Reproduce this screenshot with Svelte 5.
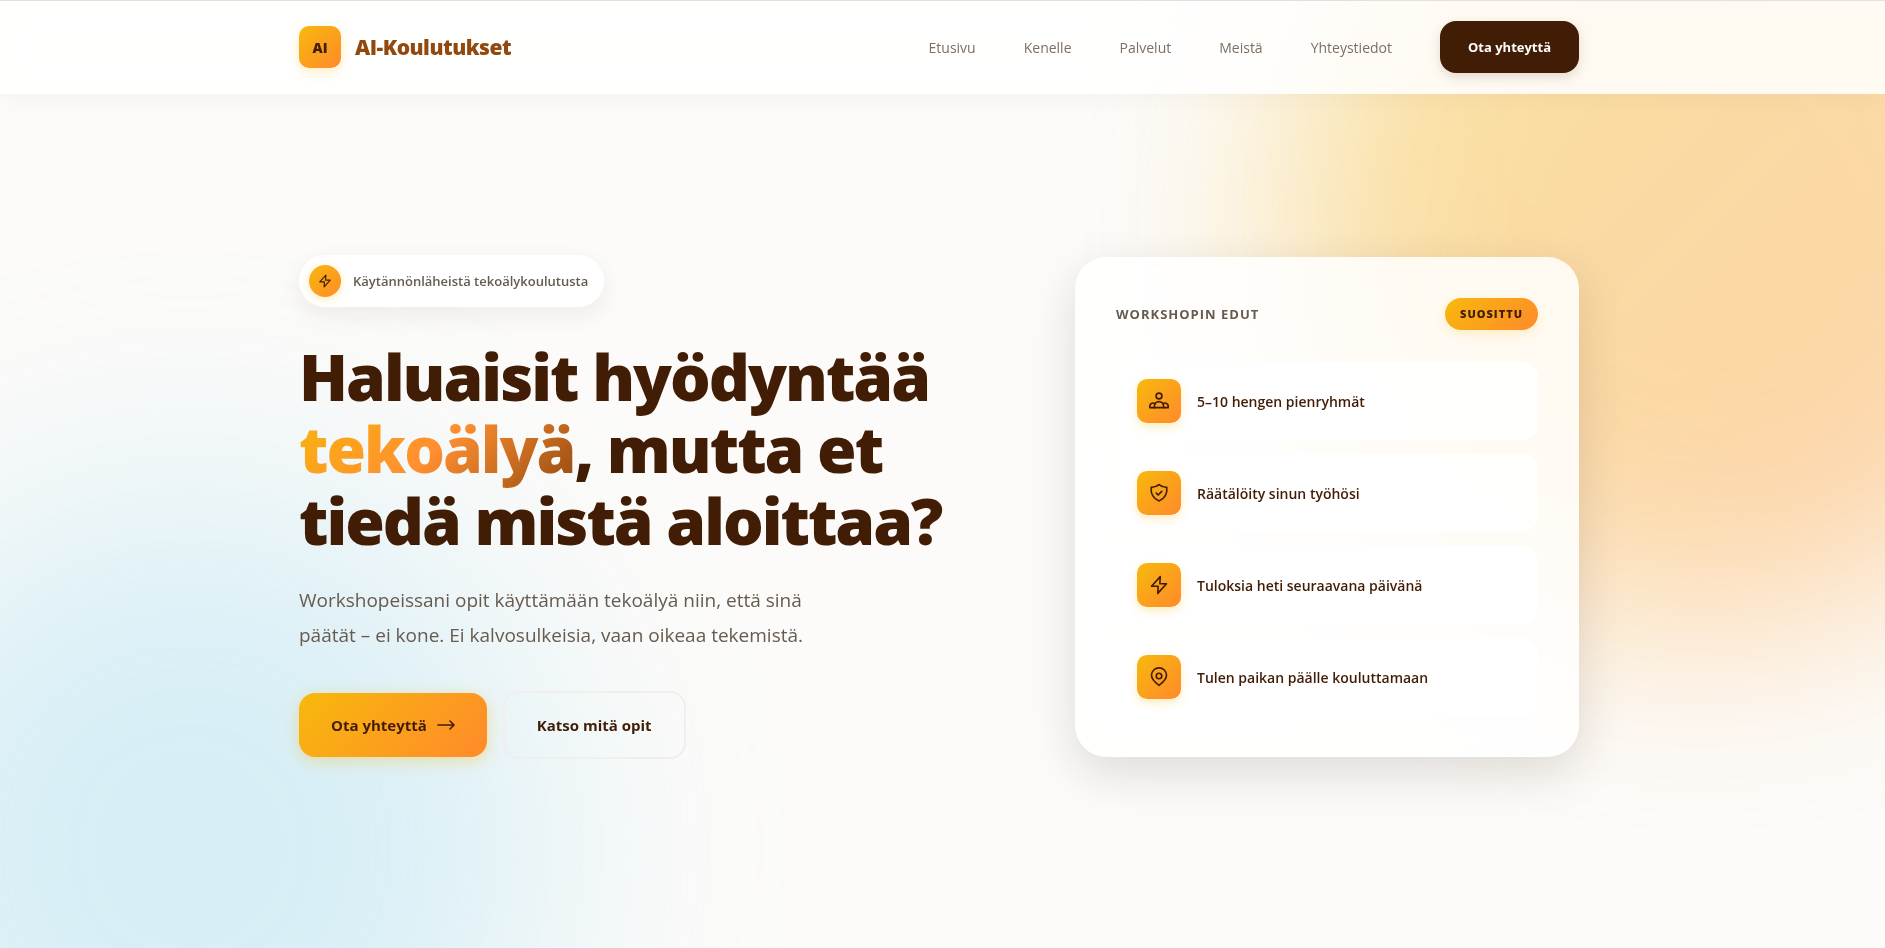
<script lang="ts">
  const navLinks = [
    { label: 'Etusivu', href: '#etusivu' },
    { label: 'Kenelle', href: '#kenelle' },
    { label: 'Palvelut', href: '#palvelut' },
    { label: 'Meistä', href: '#meista' },
    { label: 'Yhteystiedot', href: '#yhteystiedot' },
  ];

  const benefits = [
    { icon: 'people', text: '5–10 hengen pienryhmät' },
    { icon: 'shield', text: 'Räätälöity sinun työhösi' },
    { icon: 'bolt', text: 'Tuloksia heti seuraavana päivänä' },
    { icon: 'pin', text: 'Tulen paikan päälle kouluttamaan' },
  ];
</script>

{#snippet icon(name: string, size: number)}
  <svg class="icon" width={size} height={size} viewBox="0 0 24 24" aria-hidden="true">
    {#if name === 'people'}
      <circle cx="12" cy="6" r="3.5" />
      <path d="M6.5 20v-1.800a5.500 5.500 0 0 1 11 0V20" />
      <path d="M7.200 15.300A3.800 3.800 0 0 0 1 18.600V20h22v-1.400a3.800 3.800 0 0 0-6.200-3.300" />
    {:else if name === 'shield'}
      <path d="M12 2c2.600 2.200 5.800 3.300 9.300 3.100.9 7.400-2.500 13.800-9.300 16.400C5.200 18.900 1.800 12.500 2.700 5.100 6.200 5.300 9.400 4.200 12 2z" />
      <path d="M8.800 12.200l2.200 2.200 4.300-4.400" />
    {:else if name === 'bolt'}
      <path d="M13.500 2L3 13.500h8L10.500 22 21 10.500h-8z" />
    {:else if name === 'pin'}
      <path d="M12 22c-3.500-2.500-9-6.500-9-12a9 9 0 0 1 18 0c0 5.500-5.500 9.500-9 12z" />
      <circle cx="12" cy="10.800" r="3.300" />
    {/if}
  </svg>
{/snippet}

<div class="page">
  <div class="glow glow-warm"></div>
  <div class="glow glow-cool"></div>

  <header class="header">
    <div class="container header-inner">
      <a href="#etusivu" class="logo">
        <span class="logo-mark">AI</span>
        <span class="logo-text">AI-Koulutukset</span>
      </a>
      <nav class="nav">
        {#each navLinks as link}
          <a href={link.href} class="nav-link">{link.label}</a>
        {/each}
        <a href="#yhteystiedot" class="nav-cta">Ota yhteyttä</a>
      </nav>
    </div>
  </header>

  <main class="container hero">
    <section class="hero-text">
      <div class="badge">
        <span class="badge-icon">{@render icon('bolt', 14)}</span>
        Käytännönläheistä tekoälykoulutusta
      </div>
      <h1>
        Haluaisit hyödyntää<br />
        <span class="highlight">tekoälyä</span>, mutta et<br />
        tiedä mistä aloittaa?
      </h1>
      <p class="lead">
        Workshopeissani opit käyttämään tekoälyä niin, että sinä<br />
        päätät – ei kone. Ei kalvosulkeisia, vaan oikeaa tekemistä.
      </p>
      <div class="actions">
        <a href="#yhteystiedot" class="btn btn-primary">
          Ota yhteyttä
          <svg class="icon arrow" width="18" height="12" viewBox="0 0 18 12" aria-hidden="true">
            <path d="M1 6h16M13 2l4 4-4 4" />
          </svg>
        </a>
        <a href="#palvelut" class="btn btn-secondary">Katso mitä opit</a>
      </div>
    </section>

    <aside class="card">
      <div class="card-header">
        <h2>Workshopin edut</h2>
        <span class="pill">Suosittu</span>
      </div>
      <ul class="benefits">
        {#each benefits as benefit}
          <li class="benefit">
            <span class="benefit-icon">{@render icon(benefit.icon, 20)}</span>
            <span>{benefit.text}</span>
          </li>
        {/each}
      </ul>
    </aside>
  </main>
</div>

<style>
  :global(body) {
    background: #fcfbf9;
  }

  .page {
    --brown: #421d06;
    --muted: #675b50;
    --sun: linear-gradient(135deg, #f7b90c, #ff8a2b);
    position: relative;
    min-height: 100vh;
    overflow: hidden;
    box-sizing: border-box;
    padding-right: 7px;
    font-family: 'Segoe UI', 'Open Sans', 'Noto Sans', sans-serif;
    color: var(--brown);
  }

  .container {
    max-width: 1280px;
    margin: 0 auto;
  }

  .icon {
    fill: none;
    stroke: currentColor;
    stroke-width: 2;
    stroke-linecap: round;
    stroke-linejoin: round;
  }

  .arrow {
    stroke-width: 1.6;
  }

  .glow {
    position: absolute;
    border-radius: 50%;
  }

  .glow-warm {
    top: -200px;
    right: -230px;
    width: 830px;
    height: 830px;
    background: linear-gradient(135deg, #f4c020 10%, #ff9a40 90%);
    filter: blur(100px);
    opacity: 0.42;
  }

  .glow-cool {
    left: -180px;
    bottom: -270px;
    width: 740px;
    height: 740px;
    background: radial-gradient(#7fd0f0 30%, #a5dcf2);
    filter: blur(120px);
    opacity: 0.3;
  }

  .header {
    position: relative;
    margin-right: -7px;
    padding-right: 7px;
    border-top: 1px solid #e2e1df;
    background: rgba(255, 255, 255, 0.85);
    box-shadow: 0 4px 24px rgba(66, 29, 6, 0.04);
    backdrop-filter: blur(20px);
  }

  .header-inner {
    display: flex;
    align-items: center;
    justify-content: space-between;
    padding: 20px 0 21px;
  }

  .logo {
    display: flex;
    align-items: center;
    gap: 14px;
    text-decoration: none;
  }

  .logo-mark {
    display: grid;
    place-items: center;
    width: 42px;
    height: 42px;
    border-radius: 10px;
    background: var(--sun);
    box-shadow: 0 4px 12px rgba(247, 185, 12, 0.25);
    color: var(--brown);
    font-size: 14px;
    font-weight: 800;
  }

  .logo-text {
    color: #924910;
    font-size: 21px;
    font-weight: 800;
    letter-spacing: -0.5px;
  }

  .nav {
    display: flex;
    align-items: center;
    gap: 48px;
  }

  .nav-link {
    color: #7c6f64;
    font-size: 14px;
    font-weight: 500;
    text-decoration: none;
  }

  .nav-cta {
    padding: 0 28px;
    border-radius: 16px;
    background: var(--brown);
    box-shadow: 0 4px 12px rgba(66, 29, 6, 0.15);
    color: #fff;
    font-size: 13px;
    font-weight: 700;
    line-height: 52px;
    text-decoration: none;
  }

  .hero {
    position: relative;
    display: flex;
    align-items: center;
    justify-content: space-between;
    padding: 161px 0;
  }

  .badge {
    display: inline-flex;
    align-items: center;
    gap: 12px;
    padding: 10px 16px 10px 10px;
    border-radius: 26px;
    background: #fff;
    box-shadow: 0 8px 24px rgba(66, 29, 6, 0.07);
    color: var(--muted);
    font-size: 13px;
    font-weight: 600;
  }

  .badge-icon {
    display: grid;
    place-items: center;
    width: 32px;
    height: 32px;
    border-radius: 50%;
    background: var(--sun);
    box-shadow: 0 2px 8px rgba(247, 185, 12, 0.3);
    color: var(--brown);
  }

  h1 {
    margin: 34px 0 26px;
    font-size: 64px;
    font-weight: 800;
    line-height: 72px;
    letter-spacing: -2px;
  }

  .highlight {
    background: linear-gradient(135deg, #f9b40e 0%, #ff8f30 50%, #924910 100%);
    background-clip: text;
    color: transparent;
  }

  .lead {
    margin: 0;
    color: var(--muted);
    font-size: 19px;
    line-height: 35px;
  }

  .actions {
    display: flex;
    align-items: center;
    gap: 16px;
    margin-top: 38px;
  }

  .btn {
    display: flex;
    align-items: center;
    gap: 10px;
    border-radius: 16px;
    color: var(--brown);
    font-size: 15px;
    font-weight: 700;
    line-height: 64px;
    text-decoration: none;
  }

  .btn-primary {
    padding: 0 32px;
    background: var(--sun);
    box-shadow: 0 4px 16px rgba(247, 185, 12, 0.35);
  }

  .btn-secondary {
    padding: 0 32px;
    border: 2px solid #f1eeeb;
  }

  .card {
    box-sizing: border-box;
    width: 504px;
    padding: 41px;
    border-radius: 32px;
    background: rgba(255, 255, 255, 0.85);
    box-shadow: 0 16px 48px rgba(40, 30, 20, 0.14);
    backdrop-filter: blur(20px);
  }

  .card-header {
    display: flex;
    align-items: center;
    justify-content: space-between;
    margin-bottom: 32px;
  }

  h2 {
    margin: 0;
    color: var(--muted);
    font-size: 13px;
    font-weight: 700;
    letter-spacing: 1px;
    text-transform: uppercase;
  }

  .pill {
    padding: 0 15px;
    border-radius: 16px;
    background: var(--sun);
    box-shadow: 0 4px 12px rgba(247, 185, 12, 0.2);
    font-size: 11px;
    font-weight: 800;
    letter-spacing: 1px;
    line-height: 32px;
    text-transform: uppercase;
  }

  .benefits {
    display: flex;
    flex-direction: column;
    gap: 14px;
    margin: 0;
    padding: 0;
    list-style: none;
  }

  .benefit {
    display: flex;
    align-items: center;
    gap: 16px;
    padding: 17px 21px;
    border-radius: 16px;
    background: rgba(255, 255, 255, 0.9);
    font-size: 14px;
    font-weight: 600;
  }

  .benefit-icon {
    display: grid;
    place-items: center;
    width: 44px;
    height: 44px;
    border-radius: 10px;
    background: var(--sun);
    box-shadow: 0 4px 10px rgba(247, 185, 12, 0.25);
  }

  @media (max-width: 1320px) {
    .container {
      padding-left: 24px;
      padding-right: 24px;
    }

    .hero {
      flex-wrap: wrap;
      gap: 48px;
    }

    .nav {
      gap: 24px;
    }
  }
</style>
